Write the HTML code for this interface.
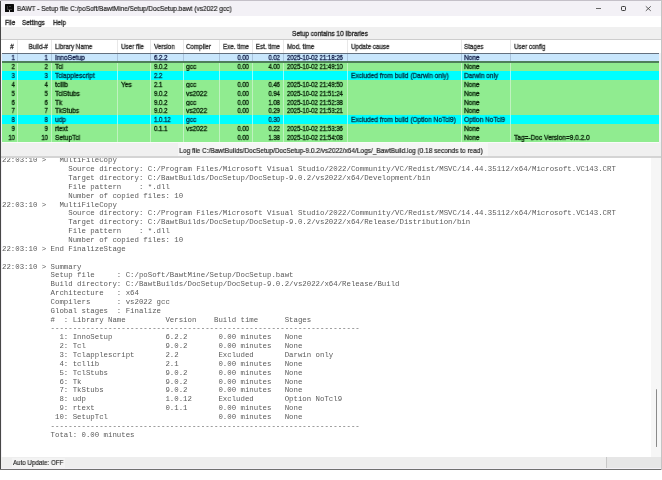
<!DOCTYPE html>
<html><head><meta charset="utf-8"><style>
html,body{margin:0;padding:0;}
body{width:662px;height:480px;position:relative;overflow:hidden;background:#fff;font-family:"Liberation Sans", sans-serif;}
.t{position:absolute;white-space:pre;line-height:1;will-change:transform;}
.b{position:absolute;}
.m{position:absolute;white-space:pre;font-family:"Liberation Mono", monospace;line-height:1;will-change:transform;}
</style></head><body>

<div class="b" style="left:0.00px;top:0.00px;width:661.00px;height:470.00px;background:#f3f1f6;border-radius:4px 4px 0 0;"></div>
<div class="b" style="left:5.00px;top:4.40px;width:8.70px;height:7.35px;background:#0a0a0a;border-radius:0.5px;"></div>
<div class="b" style="left:6.60px;top:6.30px;width:1.00px;height:2.50px;background:#3c3c3c;"></div>
<div class="b" style="left:6.60px;top:8.80px;width:5.50px;height:0.60px;background:#3c3c3c;"></div>
<div class="b" style="left:9.40px;top:6.30px;width:1.20px;height:0.60px;background:#3c3c3c;"></div>
<div class="b" style="left:9.30px;top:9.90px;width:0.90px;height:1.85px;background:#c8c8c8;"></div>
<div class="t" style="left:17.10px;transform-origin:0 0;top:4.95px;font-size:7.5px;color:#2a2a2a;transform:scaleX(0.868);-webkit-text-stroke:0.22px #2a2a2a;">BAWT - Setup file C:/poSoft/BawtMine/Setup/DocSetup.bawt (vs2022 gcc)</div>
<div class="b" style="left:596.00px;top:8.00px;width:5.40px;height:1.00px;background:#666;"></div>
<div class="b" style="left:620.80px;top:6.20px;width:5.20px;height:4.60px;background:transparent;border:0.9px solid #3a3a3a;border-radius:1.3px;box-sizing:border-box;"></div>
<svg class="b" style="left:644px;top:5px" width="9" height="8" viewBox="0 0 9 8"><path d="M1.8 1.3 L6.8 5.9 M6.8 1.3 L1.8 5.9" stroke="#3a3a3a" stroke-width="0.8"/></svg>
<div class="b" style="left:1.00px;top:15.70px;width:659.50px;height:11.40px;background:#fff;"></div>
<div class="t" style="left:4.80px;transform-origin:0 0;top:18.57px;font-size:7.0px;color:#2a2a2a;transform:scaleX(0.9);-webkit-text-stroke:0.32px #2a2a2a;">File</div>
<div class="t" style="left:22.10px;transform-origin:0 0;top:18.57px;font-size:7.0px;color:#2a2a2a;transform:scaleX(0.9);-webkit-text-stroke:0.32px #2a2a2a;">Settings</div>
<div class="t" style="left:53.20px;transform-origin:0 0;top:18.57px;font-size:7.0px;color:#2a2a2a;transform:scaleX(0.9);-webkit-text-stroke:0.32px #2a2a2a;">Help</div>
<div class="b" style="left:1.00px;top:26.70px;width:659.50px;height:12.60px;background:#f0f0f0;"></div>
<div class="b" style="left:1.00px;top:39.10px;width:659.50px;height:1.20px;background:#cdcdcd;"></div>
<div class="t" style="left:-269.60px;width:1200px;text-align:center;transform-origin:50% 0;top:30.37px;font-size:7.0px;color:#2a2a2a;transform:scaleX(0.92);-webkit-text-stroke:0.32px #2a2a2a;">Setup contains 10 libraries</div>
<div class="b" style="left:1.00px;top:40.30px;width:659.50px;height:12.90px;background:#fff;"></div>
<div class="t" style="left:-587.90px;width:1200px;text-align:center;transform-origin:50% 0;top:43.07px;font-size:7.0px;color:#333;transform:scaleX(0.89);-webkit-text-stroke:0.32px #333;">#</div>
<div class="b" style="left:16.70px;top:40.00px;width:1.00px;height:13.00px;background:#e8e8e8;"></div>
<div class="t" style="left:-552.50px;width:600px;text-align:right;transform-origin:100% 0;top:43.07px;font-size:7.0px;color:#333;transform:scaleX(0.89);-webkit-text-stroke:0.32px #333;">Build-#</div>
<div class="b" style="left:50.70px;top:40.00px;width:1.00px;height:13.00px;background:#e8e8e8;"></div>
<div class="t" style="left:54.50px;transform-origin:0 0;top:43.07px;font-size:7.0px;color:#333;transform:scaleX(0.89);-webkit-text-stroke:0.32px #333;">Library Name</div>
<div class="b" style="left:116.70px;top:40.00px;width:1.00px;height:13.00px;background:#e8e8e8;"></div>
<div class="t" style="left:120.50px;transform-origin:0 0;top:43.07px;font-size:7.0px;color:#333;transform:scaleX(0.89);-webkit-text-stroke:0.32px #333;">User file</div>
<div class="b" style="left:149.80px;top:40.00px;width:1.00px;height:13.00px;background:#e8e8e8;"></div>
<div class="t" style="left:153.60px;transform-origin:0 0;top:43.07px;font-size:7.0px;color:#333;transform:scaleX(0.89);-webkit-text-stroke:0.32px #333;">Version</div>
<div class="b" style="left:182.60px;top:40.00px;width:1.00px;height:13.00px;background:#e8e8e8;"></div>
<div class="t" style="left:186.40px;transform-origin:0 0;top:43.07px;font-size:7.0px;color:#333;transform:scaleX(0.89);-webkit-text-stroke:0.32px #333;">Compiler</div>
<div class="b" style="left:218.80px;top:40.00px;width:1.00px;height:13.00px;background:#e8e8e8;"></div>
<div class="t" style="left:-351.50px;width:600px;text-align:right;transform-origin:100% 0;top:43.07px;font-size:7.0px;color:#333;transform:scaleX(0.89);-webkit-text-stroke:0.32px #333;">Exe. time</div>
<div class="b" style="left:251.70px;top:40.00px;width:1.00px;height:13.00px;background:#e8e8e8;"></div>
<div class="t" style="left:-320.10px;width:600px;text-align:right;transform-origin:100% 0;top:43.07px;font-size:7.0px;color:#333;transform:scaleX(0.89);-webkit-text-stroke:0.32px #333;">Est. time</div>
<div class="b" style="left:283.10px;top:40.00px;width:1.00px;height:13.00px;background:#e8e8e8;"></div>
<div class="t" style="left:286.90px;transform-origin:0 0;top:43.07px;font-size:7.0px;color:#333;transform:scaleX(0.89);-webkit-text-stroke:0.32px #333;">Mod. time</div>
<div class="b" style="left:346.70px;top:40.00px;width:1.00px;height:13.00px;background:#e8e8e8;"></div>
<div class="t" style="left:350.50px;transform-origin:0 0;top:43.07px;font-size:7.0px;color:#333;transform:scaleX(0.89);-webkit-text-stroke:0.32px #333;">Update cause</div>
<div class="b" style="left:460.60px;top:40.00px;width:1.00px;height:13.00px;background:#e8e8e8;"></div>
<div class="t" style="left:464.40px;transform-origin:0 0;top:43.07px;font-size:7.0px;color:#333;transform:scaleX(0.89);-webkit-text-stroke:0.32px #333;">Stages</div>
<div class="b" style="left:510.20px;top:40.00px;width:1.00px;height:13.00px;background:#e8e8e8;"></div>
<div class="t" style="left:514.00px;transform-origin:0 0;top:43.07px;font-size:7.0px;color:#333;transform:scaleX(0.89);-webkit-text-stroke:0.32px #333;">User config</div>
<div class="b" style="left:1.50px;top:53.10px;width:657.50px;height:8.90px;background:#c8e6fc;"></div>
<div class="b" style="left:16.70px;top:53.10px;width:1.00px;height:8.85px;background:#aac4de;"></div>
<div class="b" style="left:50.70px;top:53.10px;width:1.00px;height:8.85px;background:#aac4de;"></div>
<div class="b" style="left:116.70px;top:53.10px;width:1.00px;height:8.85px;background:#aac4de;"></div>
<div class="b" style="left:149.80px;top:53.10px;width:1.00px;height:8.85px;background:#aac4de;"></div>
<div class="b" style="left:182.60px;top:53.10px;width:1.00px;height:8.85px;background:#aac4de;"></div>
<div class="b" style="left:218.80px;top:53.10px;width:1.00px;height:8.85px;background:#aac4de;"></div>
<div class="b" style="left:251.70px;top:53.10px;width:1.00px;height:8.85px;background:#aac4de;"></div>
<div class="b" style="left:283.10px;top:53.10px;width:1.00px;height:8.85px;background:#aac4de;"></div>
<div class="b" style="left:346.70px;top:53.10px;width:1.00px;height:8.85px;background:#aac4de;"></div>
<div class="b" style="left:460.60px;top:53.10px;width:1.00px;height:8.85px;background:#aac4de;"></div>
<div class="b" style="left:510.20px;top:53.10px;width:1.00px;height:8.85px;background:#aac4de;"></div>
<div class="t" style="left:-585.10px;width:600px;text-align:right;transform-origin:100% 0;top:54.27px;font-size:7.0px;color:#14204a;transform:scaleX(0.86);-webkit-text-stroke:0.32px #14204a;">1</div>
<div class="t" style="left:-552.50px;width:600px;text-align:right;transform-origin:100% 0;top:54.27px;font-size:7.0px;color:#14204a;transform:scaleX(0.86);-webkit-text-stroke:0.32px #14204a;">1</div>
<div class="t" style="left:54.50px;transform-origin:0 0;top:54.27px;font-size:7.0px;color:#14204a;transform:scaleX(0.935);-webkit-text-stroke:0.32px #14204a;">InnoSetup</div>
<div class="t" style="left:153.60px;transform-origin:0 0;top:54.27px;font-size:7.0px;color:#14204a;transform:scaleX(0.86);-webkit-text-stroke:0.32px #14204a;">6.2.2</div>
<div class="t" style="left:-351.50px;width:600px;text-align:right;transform-origin:100% 0;top:54.27px;font-size:7.0px;color:#14204a;transform:scaleX(0.86);-webkit-text-stroke:0.32px #14204a;">0.00</div>
<div class="t" style="left:-320.10px;width:600px;text-align:right;transform-origin:100% 0;top:54.27px;font-size:7.0px;color:#14204a;transform:scaleX(0.86);-webkit-text-stroke:0.32px #14204a;">0.02</div>
<div class="t" style="left:286.90px;transform-origin:0 0;top:54.27px;font-size:7.0px;color:#14204a;transform:scaleX(0.86);-webkit-text-stroke:0.32px #14204a;">2025-10-02 21:18:26</div>
<div class="t" style="left:464.40px;transform-origin:0 0;top:54.27px;font-size:7.0px;color:#14204a;transform:scaleX(0.935);-webkit-text-stroke:0.32px #14204a;">None</div>
<div class="b" style="left:1.50px;top:61.95px;width:657.50px;height:8.90px;background:#90ec90;"></div>
<div class="b" style="left:16.70px;top:61.95px;width:1.00px;height:8.85px;background:#c0f2c0;"></div>
<div class="b" style="left:50.70px;top:61.95px;width:1.00px;height:8.85px;background:#c0f2c0;"></div>
<div class="b" style="left:116.70px;top:61.95px;width:1.00px;height:8.85px;background:#c0f2c0;"></div>
<div class="b" style="left:149.80px;top:61.95px;width:1.00px;height:8.85px;background:#c0f2c0;"></div>
<div class="b" style="left:182.60px;top:61.95px;width:1.00px;height:8.85px;background:#c0f2c0;"></div>
<div class="b" style="left:218.80px;top:61.95px;width:1.00px;height:8.85px;background:#c0f2c0;"></div>
<div class="b" style="left:251.70px;top:61.95px;width:1.00px;height:8.85px;background:#c0f2c0;"></div>
<div class="b" style="left:283.10px;top:61.95px;width:1.00px;height:8.85px;background:#c0f2c0;"></div>
<div class="b" style="left:346.70px;top:61.95px;width:1.00px;height:8.85px;background:#c0f2c0;"></div>
<div class="b" style="left:460.60px;top:61.95px;width:1.00px;height:8.85px;background:#c0f2c0;"></div>
<div class="b" style="left:510.20px;top:61.95px;width:1.00px;height:8.85px;background:#c0f2c0;"></div>
<div class="t" style="left:-585.10px;width:600px;text-align:right;transform-origin:100% 0;top:63.12px;font-size:7.0px;color:#0a240a;transform:scaleX(0.86);-webkit-text-stroke:0.32px #0a240a;">2</div>
<div class="t" style="left:-552.50px;width:600px;text-align:right;transform-origin:100% 0;top:63.12px;font-size:7.0px;color:#0a240a;transform:scaleX(0.86);-webkit-text-stroke:0.32px #0a240a;">2</div>
<div class="t" style="left:54.50px;transform-origin:0 0;top:63.12px;font-size:7.0px;color:#0a240a;transform:scaleX(0.935);-webkit-text-stroke:0.32px #0a240a;">Tcl</div>
<div class="t" style="left:153.60px;transform-origin:0 0;top:63.12px;font-size:7.0px;color:#0a240a;transform:scaleX(0.86);-webkit-text-stroke:0.32px #0a240a;">9.0.2</div>
<div class="t" style="left:186.40px;transform-origin:0 0;top:63.12px;font-size:7.0px;color:#0a240a;transform:scaleX(0.935);-webkit-text-stroke:0.32px #0a240a;">gcc</div>
<div class="t" style="left:-351.50px;width:600px;text-align:right;transform-origin:100% 0;top:63.12px;font-size:7.0px;color:#0a240a;transform:scaleX(0.86);-webkit-text-stroke:0.32px #0a240a;">0.00</div>
<div class="t" style="left:-320.10px;width:600px;text-align:right;transform-origin:100% 0;top:63.12px;font-size:7.0px;color:#0a240a;transform:scaleX(0.86);-webkit-text-stroke:0.32px #0a240a;">4.00</div>
<div class="t" style="left:286.90px;transform-origin:0 0;top:63.12px;font-size:7.0px;color:#0a240a;transform:scaleX(0.86);-webkit-text-stroke:0.32px #0a240a;">2025-10-02 21:49:10</div>
<div class="t" style="left:464.40px;transform-origin:0 0;top:63.12px;font-size:7.0px;color:#0a240a;transform:scaleX(0.935);-webkit-text-stroke:0.32px #0a240a;">None</div>
<div class="b" style="left:1.50px;top:70.79px;width:657.50px;height:8.90px;background:#00ffff;"></div>
<div class="b" style="left:16.70px;top:70.79px;width:1.00px;height:8.85px;background:#90ffff;"></div>
<div class="b" style="left:50.70px;top:70.79px;width:1.00px;height:8.85px;background:#90ffff;"></div>
<div class="b" style="left:116.70px;top:70.79px;width:1.00px;height:8.85px;background:#90ffff;"></div>
<div class="b" style="left:149.80px;top:70.79px;width:1.00px;height:8.85px;background:#90ffff;"></div>
<div class="b" style="left:182.60px;top:70.79px;width:1.00px;height:8.85px;background:#90ffff;"></div>
<div class="b" style="left:218.80px;top:70.79px;width:1.00px;height:8.85px;background:#90ffff;"></div>
<div class="b" style="left:251.70px;top:70.79px;width:1.00px;height:8.85px;background:#90ffff;"></div>
<div class="b" style="left:283.10px;top:70.79px;width:1.00px;height:8.85px;background:#90ffff;"></div>
<div class="b" style="left:346.70px;top:70.79px;width:1.00px;height:8.85px;background:#90ffff;"></div>
<div class="b" style="left:460.60px;top:70.79px;width:1.00px;height:8.85px;background:#90ffff;"></div>
<div class="b" style="left:510.20px;top:70.79px;width:1.00px;height:8.85px;background:#90ffff;"></div>
<div class="t" style="left:-585.10px;width:600px;text-align:right;transform-origin:100% 0;top:71.97px;font-size:7.0px;color:#003448;transform:scaleX(0.86);-webkit-text-stroke:0.32px #003448;">3</div>
<div class="t" style="left:-552.50px;width:600px;text-align:right;transform-origin:100% 0;top:71.97px;font-size:7.0px;color:#003448;transform:scaleX(0.86);-webkit-text-stroke:0.32px #003448;">3</div>
<div class="t" style="left:54.50px;transform-origin:0 0;top:71.97px;font-size:7.0px;color:#003448;transform:scaleX(0.935);-webkit-text-stroke:0.32px #003448;">Tclapplescript</div>
<div class="t" style="left:153.60px;transform-origin:0 0;top:71.97px;font-size:7.0px;color:#003448;transform:scaleX(0.86);-webkit-text-stroke:0.32px #003448;">2.2</div>
<div class="t" style="left:350.50px;transform-origin:0 0;top:71.97px;font-size:7.0px;color:#003448;transform:scaleX(0.935);-webkit-text-stroke:0.32px #003448;">Excluded from build (Darwin only)</div>
<div class="t" style="left:464.40px;transform-origin:0 0;top:71.97px;font-size:7.0px;color:#003448;transform:scaleX(0.935);-webkit-text-stroke:0.32px #003448;">Darwin only</div>
<div class="b" style="left:1.50px;top:79.64px;width:657.50px;height:8.90px;background:#90ec90;"></div>
<div class="b" style="left:16.70px;top:79.64px;width:1.00px;height:8.85px;background:#c0f2c0;"></div>
<div class="b" style="left:50.70px;top:79.64px;width:1.00px;height:8.85px;background:#c0f2c0;"></div>
<div class="b" style="left:116.70px;top:79.64px;width:1.00px;height:8.85px;background:#c0f2c0;"></div>
<div class="b" style="left:149.80px;top:79.64px;width:1.00px;height:8.85px;background:#c0f2c0;"></div>
<div class="b" style="left:182.60px;top:79.64px;width:1.00px;height:8.85px;background:#c0f2c0;"></div>
<div class="b" style="left:218.80px;top:79.64px;width:1.00px;height:8.85px;background:#c0f2c0;"></div>
<div class="b" style="left:251.70px;top:79.64px;width:1.00px;height:8.85px;background:#c0f2c0;"></div>
<div class="b" style="left:283.10px;top:79.64px;width:1.00px;height:8.85px;background:#c0f2c0;"></div>
<div class="b" style="left:346.70px;top:79.64px;width:1.00px;height:8.85px;background:#c0f2c0;"></div>
<div class="b" style="left:460.60px;top:79.64px;width:1.00px;height:8.85px;background:#c0f2c0;"></div>
<div class="b" style="left:510.20px;top:79.64px;width:1.00px;height:8.85px;background:#c0f2c0;"></div>
<div class="t" style="left:-585.10px;width:600px;text-align:right;transform-origin:100% 0;top:80.82px;font-size:7.0px;color:#0a240a;transform:scaleX(0.86);-webkit-text-stroke:0.32px #0a240a;">4</div>
<div class="t" style="left:-552.50px;width:600px;text-align:right;transform-origin:100% 0;top:80.82px;font-size:7.0px;color:#0a240a;transform:scaleX(0.86);-webkit-text-stroke:0.32px #0a240a;">4</div>
<div class="t" style="left:54.50px;transform-origin:0 0;top:80.82px;font-size:7.0px;color:#0a240a;transform:scaleX(0.935);-webkit-text-stroke:0.32px #0a240a;">tcllib</div>
<div class="t" style="left:120.50px;transform-origin:0 0;top:80.82px;font-size:7.0px;color:#0a240a;transform:scaleX(0.935);-webkit-text-stroke:0.32px #0a240a;">Yes</div>
<div class="t" style="left:153.60px;transform-origin:0 0;top:80.82px;font-size:7.0px;color:#0a240a;transform:scaleX(0.86);-webkit-text-stroke:0.32px #0a240a;">2.1</div>
<div class="t" style="left:186.40px;transform-origin:0 0;top:80.82px;font-size:7.0px;color:#0a240a;transform:scaleX(0.935);-webkit-text-stroke:0.32px #0a240a;">gcc</div>
<div class="t" style="left:-351.50px;width:600px;text-align:right;transform-origin:100% 0;top:80.82px;font-size:7.0px;color:#0a240a;transform:scaleX(0.86);-webkit-text-stroke:0.32px #0a240a;">0.00</div>
<div class="t" style="left:-320.10px;width:600px;text-align:right;transform-origin:100% 0;top:80.82px;font-size:7.0px;color:#0a240a;transform:scaleX(0.86);-webkit-text-stroke:0.32px #0a240a;">0.46</div>
<div class="t" style="left:286.90px;transform-origin:0 0;top:80.82px;font-size:7.0px;color:#0a240a;transform:scaleX(0.86);-webkit-text-stroke:0.32px #0a240a;">2025-10-02 21:49:50</div>
<div class="t" style="left:464.40px;transform-origin:0 0;top:80.82px;font-size:7.0px;color:#0a240a;transform:scaleX(0.935);-webkit-text-stroke:0.32px #0a240a;">None</div>
<div class="b" style="left:1.50px;top:88.49px;width:657.50px;height:8.90px;background:#90ec90;"></div>
<div class="b" style="left:16.70px;top:88.49px;width:1.00px;height:8.85px;background:#c0f2c0;"></div>
<div class="b" style="left:50.70px;top:88.49px;width:1.00px;height:8.85px;background:#c0f2c0;"></div>
<div class="b" style="left:116.70px;top:88.49px;width:1.00px;height:8.85px;background:#c0f2c0;"></div>
<div class="b" style="left:149.80px;top:88.49px;width:1.00px;height:8.85px;background:#c0f2c0;"></div>
<div class="b" style="left:182.60px;top:88.49px;width:1.00px;height:8.85px;background:#c0f2c0;"></div>
<div class="b" style="left:218.80px;top:88.49px;width:1.00px;height:8.85px;background:#c0f2c0;"></div>
<div class="b" style="left:251.70px;top:88.49px;width:1.00px;height:8.85px;background:#c0f2c0;"></div>
<div class="b" style="left:283.10px;top:88.49px;width:1.00px;height:8.85px;background:#c0f2c0;"></div>
<div class="b" style="left:346.70px;top:88.49px;width:1.00px;height:8.85px;background:#c0f2c0;"></div>
<div class="b" style="left:460.60px;top:88.49px;width:1.00px;height:8.85px;background:#c0f2c0;"></div>
<div class="b" style="left:510.20px;top:88.49px;width:1.00px;height:8.85px;background:#c0f2c0;"></div>
<div class="t" style="left:-585.10px;width:600px;text-align:right;transform-origin:100% 0;top:89.66px;font-size:7.0px;color:#0a240a;transform:scaleX(0.86);-webkit-text-stroke:0.32px #0a240a;">5</div>
<div class="t" style="left:-552.50px;width:600px;text-align:right;transform-origin:100% 0;top:89.66px;font-size:7.0px;color:#0a240a;transform:scaleX(0.86);-webkit-text-stroke:0.32px #0a240a;">5</div>
<div class="t" style="left:54.50px;transform-origin:0 0;top:89.66px;font-size:7.0px;color:#0a240a;transform:scaleX(0.935);-webkit-text-stroke:0.32px #0a240a;">TclStubs</div>
<div class="t" style="left:153.60px;transform-origin:0 0;top:89.66px;font-size:7.0px;color:#0a240a;transform:scaleX(0.86);-webkit-text-stroke:0.32px #0a240a;">9.0.2</div>
<div class="t" style="left:186.40px;transform-origin:0 0;top:89.66px;font-size:7.0px;color:#0a240a;transform:scaleX(0.935);-webkit-text-stroke:0.32px #0a240a;">vs2022</div>
<div class="t" style="left:-351.50px;width:600px;text-align:right;transform-origin:100% 0;top:89.66px;font-size:7.0px;color:#0a240a;transform:scaleX(0.86);-webkit-text-stroke:0.32px #0a240a;">0.00</div>
<div class="t" style="left:-320.10px;width:600px;text-align:right;transform-origin:100% 0;top:89.66px;font-size:7.0px;color:#0a240a;transform:scaleX(0.86);-webkit-text-stroke:0.32px #0a240a;">0.94</div>
<div class="t" style="left:286.90px;transform-origin:0 0;top:89.66px;font-size:7.0px;color:#0a240a;transform:scaleX(0.86);-webkit-text-stroke:0.32px #0a240a;">2025-10-02 21:51:24</div>
<div class="t" style="left:464.40px;transform-origin:0 0;top:89.66px;font-size:7.0px;color:#0a240a;transform:scaleX(0.935);-webkit-text-stroke:0.32px #0a240a;">None</div>
<div class="b" style="left:1.50px;top:97.34px;width:657.50px;height:8.90px;background:#90ec90;"></div>
<div class="b" style="left:16.70px;top:97.34px;width:1.00px;height:8.85px;background:#c0f2c0;"></div>
<div class="b" style="left:50.70px;top:97.34px;width:1.00px;height:8.85px;background:#c0f2c0;"></div>
<div class="b" style="left:116.70px;top:97.34px;width:1.00px;height:8.85px;background:#c0f2c0;"></div>
<div class="b" style="left:149.80px;top:97.34px;width:1.00px;height:8.85px;background:#c0f2c0;"></div>
<div class="b" style="left:182.60px;top:97.34px;width:1.00px;height:8.85px;background:#c0f2c0;"></div>
<div class="b" style="left:218.80px;top:97.34px;width:1.00px;height:8.85px;background:#c0f2c0;"></div>
<div class="b" style="left:251.70px;top:97.34px;width:1.00px;height:8.85px;background:#c0f2c0;"></div>
<div class="b" style="left:283.10px;top:97.34px;width:1.00px;height:8.85px;background:#c0f2c0;"></div>
<div class="b" style="left:346.70px;top:97.34px;width:1.00px;height:8.85px;background:#c0f2c0;"></div>
<div class="b" style="left:460.60px;top:97.34px;width:1.00px;height:8.85px;background:#c0f2c0;"></div>
<div class="b" style="left:510.20px;top:97.34px;width:1.00px;height:8.85px;background:#c0f2c0;"></div>
<div class="t" style="left:-585.10px;width:600px;text-align:right;transform-origin:100% 0;top:98.51px;font-size:7.0px;color:#0a240a;transform:scaleX(0.86);-webkit-text-stroke:0.32px #0a240a;">6</div>
<div class="t" style="left:-552.50px;width:600px;text-align:right;transform-origin:100% 0;top:98.51px;font-size:7.0px;color:#0a240a;transform:scaleX(0.86);-webkit-text-stroke:0.32px #0a240a;">6</div>
<div class="t" style="left:54.50px;transform-origin:0 0;top:98.51px;font-size:7.0px;color:#0a240a;transform:scaleX(0.935);-webkit-text-stroke:0.32px #0a240a;">Tk</div>
<div class="t" style="left:153.60px;transform-origin:0 0;top:98.51px;font-size:7.0px;color:#0a240a;transform:scaleX(0.86);-webkit-text-stroke:0.32px #0a240a;">9.0.2</div>
<div class="t" style="left:186.40px;transform-origin:0 0;top:98.51px;font-size:7.0px;color:#0a240a;transform:scaleX(0.935);-webkit-text-stroke:0.32px #0a240a;">gcc</div>
<div class="t" style="left:-351.50px;width:600px;text-align:right;transform-origin:100% 0;top:98.51px;font-size:7.0px;color:#0a240a;transform:scaleX(0.86);-webkit-text-stroke:0.32px #0a240a;">0.00</div>
<div class="t" style="left:-320.10px;width:600px;text-align:right;transform-origin:100% 0;top:98.51px;font-size:7.0px;color:#0a240a;transform:scaleX(0.86);-webkit-text-stroke:0.32px #0a240a;">1.08</div>
<div class="t" style="left:286.90px;transform-origin:0 0;top:98.51px;font-size:7.0px;color:#0a240a;transform:scaleX(0.86);-webkit-text-stroke:0.32px #0a240a;">2025-10-02 21:52:38</div>
<div class="t" style="left:464.40px;transform-origin:0 0;top:98.51px;font-size:7.0px;color:#0a240a;transform:scaleX(0.935);-webkit-text-stroke:0.32px #0a240a;">None</div>
<div class="b" style="left:1.50px;top:106.18px;width:657.50px;height:8.90px;background:#90ec90;"></div>
<div class="b" style="left:16.70px;top:106.18px;width:1.00px;height:8.85px;background:#c0f2c0;"></div>
<div class="b" style="left:50.70px;top:106.18px;width:1.00px;height:8.85px;background:#c0f2c0;"></div>
<div class="b" style="left:116.70px;top:106.18px;width:1.00px;height:8.85px;background:#c0f2c0;"></div>
<div class="b" style="left:149.80px;top:106.18px;width:1.00px;height:8.85px;background:#c0f2c0;"></div>
<div class="b" style="left:182.60px;top:106.18px;width:1.00px;height:8.85px;background:#c0f2c0;"></div>
<div class="b" style="left:218.80px;top:106.18px;width:1.00px;height:8.85px;background:#c0f2c0;"></div>
<div class="b" style="left:251.70px;top:106.18px;width:1.00px;height:8.85px;background:#c0f2c0;"></div>
<div class="b" style="left:283.10px;top:106.18px;width:1.00px;height:8.85px;background:#c0f2c0;"></div>
<div class="b" style="left:346.70px;top:106.18px;width:1.00px;height:8.85px;background:#c0f2c0;"></div>
<div class="b" style="left:460.60px;top:106.18px;width:1.00px;height:8.85px;background:#c0f2c0;"></div>
<div class="b" style="left:510.20px;top:106.18px;width:1.00px;height:8.85px;background:#c0f2c0;"></div>
<div class="t" style="left:-585.10px;width:600px;text-align:right;transform-origin:100% 0;top:107.36px;font-size:7.0px;color:#0a240a;transform:scaleX(0.86);-webkit-text-stroke:0.32px #0a240a;">7</div>
<div class="t" style="left:-552.50px;width:600px;text-align:right;transform-origin:100% 0;top:107.36px;font-size:7.0px;color:#0a240a;transform:scaleX(0.86);-webkit-text-stroke:0.32px #0a240a;">7</div>
<div class="t" style="left:54.50px;transform-origin:0 0;top:107.36px;font-size:7.0px;color:#0a240a;transform:scaleX(0.935);-webkit-text-stroke:0.32px #0a240a;">TkStubs</div>
<div class="t" style="left:153.60px;transform-origin:0 0;top:107.36px;font-size:7.0px;color:#0a240a;transform:scaleX(0.86);-webkit-text-stroke:0.32px #0a240a;">9.0.2</div>
<div class="t" style="left:186.40px;transform-origin:0 0;top:107.36px;font-size:7.0px;color:#0a240a;transform:scaleX(0.935);-webkit-text-stroke:0.32px #0a240a;">vs2022</div>
<div class="t" style="left:-351.50px;width:600px;text-align:right;transform-origin:100% 0;top:107.36px;font-size:7.0px;color:#0a240a;transform:scaleX(0.86);-webkit-text-stroke:0.32px #0a240a;">0.00</div>
<div class="t" style="left:-320.10px;width:600px;text-align:right;transform-origin:100% 0;top:107.36px;font-size:7.0px;color:#0a240a;transform:scaleX(0.86);-webkit-text-stroke:0.32px #0a240a;">0.29</div>
<div class="t" style="left:286.90px;transform-origin:0 0;top:107.36px;font-size:7.0px;color:#0a240a;transform:scaleX(0.86);-webkit-text-stroke:0.32px #0a240a;">2025-10-02 21:53:21</div>
<div class="t" style="left:464.40px;transform-origin:0 0;top:107.36px;font-size:7.0px;color:#0a240a;transform:scaleX(0.935);-webkit-text-stroke:0.32px #0a240a;">None</div>
<div class="b" style="left:1.50px;top:115.03px;width:657.50px;height:8.90px;background:#00ffff;"></div>
<div class="b" style="left:16.70px;top:115.03px;width:1.00px;height:8.85px;background:#90ffff;"></div>
<div class="b" style="left:50.70px;top:115.03px;width:1.00px;height:8.85px;background:#90ffff;"></div>
<div class="b" style="left:116.70px;top:115.03px;width:1.00px;height:8.85px;background:#90ffff;"></div>
<div class="b" style="left:149.80px;top:115.03px;width:1.00px;height:8.85px;background:#90ffff;"></div>
<div class="b" style="left:182.60px;top:115.03px;width:1.00px;height:8.85px;background:#90ffff;"></div>
<div class="b" style="left:218.80px;top:115.03px;width:1.00px;height:8.85px;background:#90ffff;"></div>
<div class="b" style="left:251.70px;top:115.03px;width:1.00px;height:8.85px;background:#90ffff;"></div>
<div class="b" style="left:283.10px;top:115.03px;width:1.00px;height:8.85px;background:#90ffff;"></div>
<div class="b" style="left:346.70px;top:115.03px;width:1.00px;height:8.85px;background:#90ffff;"></div>
<div class="b" style="left:460.60px;top:115.03px;width:1.00px;height:8.85px;background:#90ffff;"></div>
<div class="b" style="left:510.20px;top:115.03px;width:1.00px;height:8.85px;background:#90ffff;"></div>
<div class="t" style="left:-585.10px;width:600px;text-align:right;transform-origin:100% 0;top:116.20px;font-size:7.0px;color:#003448;transform:scaleX(0.86);-webkit-text-stroke:0.32px #003448;">8</div>
<div class="t" style="left:-552.50px;width:600px;text-align:right;transform-origin:100% 0;top:116.20px;font-size:7.0px;color:#003448;transform:scaleX(0.86);-webkit-text-stroke:0.32px #003448;">8</div>
<div class="t" style="left:54.50px;transform-origin:0 0;top:116.20px;font-size:7.0px;color:#003448;transform:scaleX(0.935);-webkit-text-stroke:0.32px #003448;">udp</div>
<div class="t" style="left:153.60px;transform-origin:0 0;top:116.20px;font-size:7.0px;color:#003448;transform:scaleX(0.86);-webkit-text-stroke:0.32px #003448;">1.0.12</div>
<div class="t" style="left:186.40px;transform-origin:0 0;top:116.20px;font-size:7.0px;color:#003448;transform:scaleX(0.935);-webkit-text-stroke:0.32px #003448;">gcc</div>
<div class="t" style="left:-320.10px;width:600px;text-align:right;transform-origin:100% 0;top:116.20px;font-size:7.0px;color:#003448;transform:scaleX(0.86);-webkit-text-stroke:0.32px #003448;">0.30</div>
<div class="t" style="left:350.50px;transform-origin:0 0;top:116.20px;font-size:7.0px;color:#003448;transform:scaleX(0.935);-webkit-text-stroke:0.32px #003448;">Excluded from build (Option NoTcl9)</div>
<div class="t" style="left:464.40px;transform-origin:0 0;top:116.20px;font-size:7.0px;color:#003448;transform:scaleX(0.935);-webkit-text-stroke:0.32px #003448;">Option NoTcl9</div>
<div class="b" style="left:1.50px;top:123.88px;width:657.50px;height:8.90px;background:#90ec90;"></div>
<div class="b" style="left:16.70px;top:123.88px;width:1.00px;height:8.85px;background:#c0f2c0;"></div>
<div class="b" style="left:50.70px;top:123.88px;width:1.00px;height:8.85px;background:#c0f2c0;"></div>
<div class="b" style="left:116.70px;top:123.88px;width:1.00px;height:8.85px;background:#c0f2c0;"></div>
<div class="b" style="left:149.80px;top:123.88px;width:1.00px;height:8.85px;background:#c0f2c0;"></div>
<div class="b" style="left:182.60px;top:123.88px;width:1.00px;height:8.85px;background:#c0f2c0;"></div>
<div class="b" style="left:218.80px;top:123.88px;width:1.00px;height:8.85px;background:#c0f2c0;"></div>
<div class="b" style="left:251.70px;top:123.88px;width:1.00px;height:8.85px;background:#c0f2c0;"></div>
<div class="b" style="left:283.10px;top:123.88px;width:1.00px;height:8.85px;background:#c0f2c0;"></div>
<div class="b" style="left:346.70px;top:123.88px;width:1.00px;height:8.85px;background:#c0f2c0;"></div>
<div class="b" style="left:460.60px;top:123.88px;width:1.00px;height:8.85px;background:#c0f2c0;"></div>
<div class="b" style="left:510.20px;top:123.88px;width:1.00px;height:8.85px;background:#c0f2c0;"></div>
<div class="t" style="left:-585.10px;width:600px;text-align:right;transform-origin:100% 0;top:125.05px;font-size:7.0px;color:#0a240a;transform:scaleX(0.86);-webkit-text-stroke:0.32px #0a240a;">9</div>
<div class="t" style="left:-552.50px;width:600px;text-align:right;transform-origin:100% 0;top:125.05px;font-size:7.0px;color:#0a240a;transform:scaleX(0.86);-webkit-text-stroke:0.32px #0a240a;">9</div>
<div class="t" style="left:54.50px;transform-origin:0 0;top:125.05px;font-size:7.0px;color:#0a240a;transform:scaleX(0.935);-webkit-text-stroke:0.32px #0a240a;">rtext</div>
<div class="t" style="left:153.60px;transform-origin:0 0;top:125.05px;font-size:7.0px;color:#0a240a;transform:scaleX(0.86);-webkit-text-stroke:0.32px #0a240a;">0.1.1</div>
<div class="t" style="left:186.40px;transform-origin:0 0;top:125.05px;font-size:7.0px;color:#0a240a;transform:scaleX(0.935);-webkit-text-stroke:0.32px #0a240a;">vs2022</div>
<div class="t" style="left:-351.50px;width:600px;text-align:right;transform-origin:100% 0;top:125.05px;font-size:7.0px;color:#0a240a;transform:scaleX(0.86);-webkit-text-stroke:0.32px #0a240a;">0.00</div>
<div class="t" style="left:-320.10px;width:600px;text-align:right;transform-origin:100% 0;top:125.05px;font-size:7.0px;color:#0a240a;transform:scaleX(0.86);-webkit-text-stroke:0.32px #0a240a;">0.22</div>
<div class="t" style="left:286.90px;transform-origin:0 0;top:125.05px;font-size:7.0px;color:#0a240a;transform:scaleX(0.86);-webkit-text-stroke:0.32px #0a240a;">2025-10-02 21:53:36</div>
<div class="t" style="left:464.40px;transform-origin:0 0;top:125.05px;font-size:7.0px;color:#0a240a;transform:scaleX(0.935);-webkit-text-stroke:0.32px #0a240a;">None</div>
<div class="b" style="left:1.50px;top:132.72px;width:657.50px;height:8.90px;background:#90ec90;"></div>
<div class="b" style="left:16.70px;top:132.72px;width:1.00px;height:8.85px;background:#c0f2c0;"></div>
<div class="b" style="left:50.70px;top:132.72px;width:1.00px;height:8.85px;background:#c0f2c0;"></div>
<div class="b" style="left:116.70px;top:132.72px;width:1.00px;height:8.85px;background:#c0f2c0;"></div>
<div class="b" style="left:149.80px;top:132.72px;width:1.00px;height:8.85px;background:#c0f2c0;"></div>
<div class="b" style="left:182.60px;top:132.72px;width:1.00px;height:8.85px;background:#c0f2c0;"></div>
<div class="b" style="left:218.80px;top:132.72px;width:1.00px;height:8.85px;background:#c0f2c0;"></div>
<div class="b" style="left:251.70px;top:132.72px;width:1.00px;height:8.85px;background:#c0f2c0;"></div>
<div class="b" style="left:283.10px;top:132.72px;width:1.00px;height:8.85px;background:#c0f2c0;"></div>
<div class="b" style="left:346.70px;top:132.72px;width:1.00px;height:8.85px;background:#c0f2c0;"></div>
<div class="b" style="left:460.60px;top:132.72px;width:1.00px;height:8.85px;background:#c0f2c0;"></div>
<div class="b" style="left:510.20px;top:132.72px;width:1.00px;height:8.85px;background:#c0f2c0;"></div>
<div class="t" style="left:-585.10px;width:600px;text-align:right;transform-origin:100% 0;top:133.90px;font-size:7.0px;color:#0a240a;transform:scaleX(0.86);-webkit-text-stroke:0.32px #0a240a;">10</div>
<div class="t" style="left:-552.50px;width:600px;text-align:right;transform-origin:100% 0;top:133.90px;font-size:7.0px;color:#0a240a;transform:scaleX(0.86);-webkit-text-stroke:0.32px #0a240a;">10</div>
<div class="t" style="left:54.50px;transform-origin:0 0;top:133.90px;font-size:7.0px;color:#0a240a;transform:scaleX(0.935);-webkit-text-stroke:0.32px #0a240a;">SetupTcl</div>
<div class="t" style="left:-351.50px;width:600px;text-align:right;transform-origin:100% 0;top:133.90px;font-size:7.0px;color:#0a240a;transform:scaleX(0.86);-webkit-text-stroke:0.32px #0a240a;">0.00</div>
<div class="t" style="left:-320.10px;width:600px;text-align:right;transform-origin:100% 0;top:133.90px;font-size:7.0px;color:#0a240a;transform:scaleX(0.86);-webkit-text-stroke:0.32px #0a240a;">1.38</div>
<div class="t" style="left:286.90px;transform-origin:0 0;top:133.90px;font-size:7.0px;color:#0a240a;transform:scaleX(0.86);-webkit-text-stroke:0.32px #0a240a;">2025-10-02 21:54:08</div>
<div class="t" style="left:464.40px;transform-origin:0 0;top:133.90px;font-size:7.0px;color:#0a240a;transform:scaleX(0.935);-webkit-text-stroke:0.32px #0a240a;">None</div>
<div class="t" style="left:514.00px;transform-origin:0 0;top:133.90px;font-size:7.0px;color:#0a240a;transform:scaleX(0.935);-webkit-text-stroke:0.32px #0a240a;">Tag=-Doc Version=9.0.2.0</div>
<div class="b" style="left:1.50px;top:52.90px;width:657.50px;height:1.60px;background:#64707e;"></div>
<div class="b" style="left:1.50px;top:61.25px;width:657.50px;height:1.50px;background:#4f7f5a;"></div>
<div class="b" style="left:1.50px;top:156.60px;width:651.00px;height:300.00px;background:#fff;"></div>
<div class="m" style="left:1.5px;top:157.35px;font-size:7.372px;color:#5a5a5a;">22:03:10 &gt;   MultiFileCopy</div>
<div class="m" style="left:1.5px;top:166.20px;font-size:7.372px;color:#5a5a5a;">               Source directory: C:/Program Files/Microsoft Visual Studio/2022/Community/VC/Redist/MSVC/14.44.35112/x64/Microsoft.VC143.CRT</div>
<div class="m" style="left:1.5px;top:175.05px;font-size:7.372px;color:#5a5a5a;">               Target directory: C:/BawtBuilds/DocSetup/DocSetup-9.0.2/vs2022/x64/Development/bin</div>
<div class="m" style="left:1.5px;top:183.89px;font-size:7.372px;color:#5a5a5a;">               File pattern    : *.dll</div>
<div class="m" style="left:1.5px;top:192.74px;font-size:7.372px;color:#5a5a5a;">               Number of copied files: 10</div>
<div class="m" style="left:1.5px;top:201.59px;font-size:7.372px;color:#5a5a5a;">22:03:10 &gt;   MultiFileCopy</div>
<div class="m" style="left:1.5px;top:210.44px;font-size:7.372px;color:#5a5a5a;">               Source directory: C:/Program Files/Microsoft Visual Studio/2022/Community/VC/Redist/MSVC/14.44.35112/x64/Microsoft.VC143.CRT</div>
<div class="m" style="left:1.5px;top:219.28px;font-size:7.372px;color:#5a5a5a;">               Target directory: C:/BawtBuilds/DocSetup/DocSetup-9.0.2/vs2022/x64/Release/Distribution/bin</div>
<div class="m" style="left:1.5px;top:228.13px;font-size:7.372px;color:#5a5a5a;">               File pattern    : *.dll</div>
<div class="m" style="left:1.5px;top:236.98px;font-size:7.372px;color:#5a5a5a;">               Number of copied files: 10</div>
<div class="m" style="left:1.5px;top:245.82px;font-size:7.372px;color:#5a5a5a;">22:03:10 &gt; End FinalizeStage</div>
<div class="m" style="left:1.5px;top:263.52px;font-size:7.372px;color:#5a5a5a;">22:03:10 &gt; Summary</div>
<div class="m" style="left:1.5px;top:272.36px;font-size:7.372px;color:#5a5a5a;">           Setup file     : C:/poSoft/BawtMine/Setup/DocSetup.bawt</div>
<div class="m" style="left:1.5px;top:281.21px;font-size:7.372px;color:#5a5a5a;">           Build directory: C:/BawtBuilds/DocSetup/DocSetup-9.0.2/vs2022/x64/Release/Build</div>
<div class="m" style="left:1.5px;top:290.06px;font-size:7.372px;color:#5a5a5a;">           Architecture   : x64</div>
<div class="m" style="left:1.5px;top:298.91px;font-size:7.372px;color:#5a5a5a;">           Compilers      : vs2022 gcc</div>
<div class="m" style="left:1.5px;top:307.75px;font-size:7.372px;color:#5a5a5a;">           Global stages  : Finalize</div>
<div class="m" style="left:1.5px;top:316.60px;font-size:7.372px;color:#5a5a5a;">           #  : Library Name         Version    Build time      Stages</div>
<div class="m" style="left:1.5px;top:325.45px;font-size:7.372px;color:#5a5a5a;">           ----------------------------------------------------------------------</div>
<div class="m" style="left:1.5px;top:334.29px;font-size:7.372px;color:#5a5a5a;">             1: InnoSetup            6.2.2       0.00 minutes   None</div>
<div class="m" style="left:1.5px;top:343.14px;font-size:7.372px;color:#5a5a5a;">             2: Tcl                  9.0.2       0.00 minutes   None</div>
<div class="m" style="left:1.5px;top:351.99px;font-size:7.372px;color:#5a5a5a;">             3: Tclapplescript       2.2         Excluded       Darwin only</div>
<div class="m" style="left:1.5px;top:360.83px;font-size:7.372px;color:#5a5a5a;">             4: tcllib               2.1         0.00 minutes   None</div>
<div class="m" style="left:1.5px;top:369.68px;font-size:7.372px;color:#5a5a5a;">             5: TclStubs             9.0.2       0.00 minutes   None</div>
<div class="m" style="left:1.5px;top:378.53px;font-size:7.372px;color:#5a5a5a;">             6: Tk                   9.0.2       0.00 minutes   None</div>
<div class="m" style="left:1.5px;top:387.38px;font-size:7.372px;color:#5a5a5a;">             7: TkStubs              9.0.2       0.00 minutes   None</div>
<div class="m" style="left:1.5px;top:396.22px;font-size:7.372px;color:#5a5a5a;">             8: udp                  1.0.12      Excluded       Option NoTcl9</div>
<div class="m" style="left:1.5px;top:405.07px;font-size:7.372px;color:#5a5a5a;">             9: rtext                0.1.1       0.00 minutes   None</div>
<div class="m" style="left:1.5px;top:413.92px;font-size:7.372px;color:#5a5a5a;">            10: SetupTcl                         0.00 minutes   None</div>
<div class="m" style="left:1.5px;top:422.76px;font-size:7.372px;color:#5a5a5a;">           ----------------------------------------------------------------------</div>
<div class="m" style="left:1.5px;top:431.61px;font-size:7.372px;color:#5a5a5a;">           Total: 0.00 minutes</div>
<div class="b" style="left:1.00px;top:141.57px;width:659.50px;height:14.73px;background:#f0f0f0;"></div>
<div class="b" style="left:1.50px;top:141.77px;width:657.50px;height:1.20px;background:#f8fcf8;"></div>
<div class="b" style="left:177.50px;top:143.40px;width:310.00px;height:12.40px;background:#f6f6f6;"></div>
<div class="b" style="left:1.00px;top:155.90px;width:659.50px;height:1.70px;background:#d4d4d4;"></div>
<div class="t" style="left:-268.80px;width:1200px;text-align:center;transform-origin:50% 0;top:147.35px;font-size:7.5px;color:#2a2a2a;transform:scaleX(0.867);-webkit-text-stroke:0.22px #2a2a2a;">Log file C:/BawtBuilds/DocSetup/DocSetup-9.0.2/vs2022/x64/Logs/_BawtBuild.log (0.18 seconds to read)</div>
<div class="b" style="left:651.20px;top:157.60px;width:9.60px;height:299.20px;background:#f6f6f6;"></div>
<div class="b" style="left:655.60px;top:389.20px;width:1.60px;height:57.60px;background:#8a8a8a;border-radius:0.8px;"></div>
<div class="b" style="left:1.00px;top:456.60px;width:659.50px;height:11.80px;background:#eeeeee;"></div>
<div class="b" style="left:11.80px;top:457.50px;width:53.50px;height:10.00px;background:#f3f3f3;"></div>
<div class="b" style="left:606.50px;top:456.60px;width:54.00px;height:11.80px;background:#e6e6e6;"></div>
<div class="b" style="left:606.20px;top:456.60px;width:0.80px;height:11.80px;background:#c8c8c8;"></div>
<div class="t" style="left:12.90px;transform-origin:0 0;top:460.36px;font-size:6.9px;color:#222;transform:scaleX(0.9);-webkit-text-stroke:0.15px #222;">Auto Update: OFF</div>
<div class="b" style="left:0.00px;top:0.00px;width:1.40px;height:470.00px;background:#474747;"></div>
<div class="b" style="left:0.00px;top:468.60px;width:661.00px;height:1.20px;background:#707070;"></div>
<div class="b" style="left:660.60px;top:0.00px;width:1.40px;height:470.00px;background:#c4c4c4;"></div>
<div class="b" style="left:0.00px;top:0.00px;width:661.00px;height:0.90px;background:#c4c0c8;"></div>
</body></html>
